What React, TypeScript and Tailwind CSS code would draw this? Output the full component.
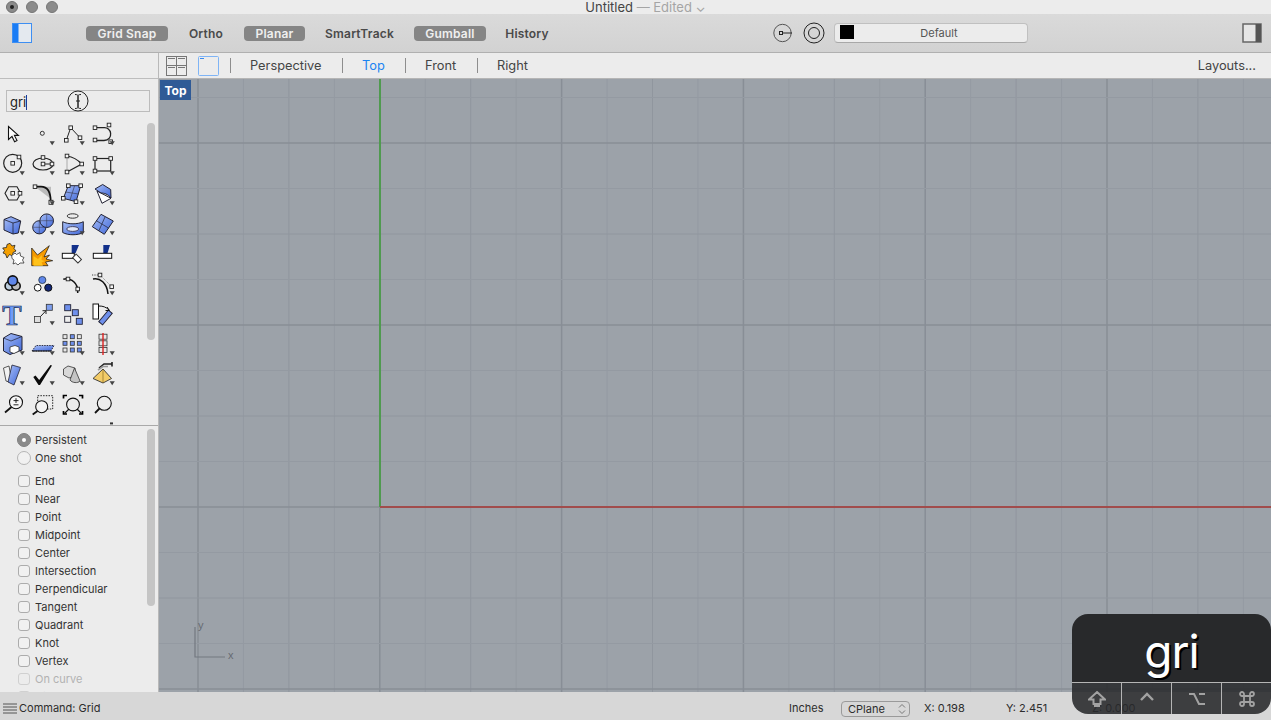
import type { ReactNode } from "react";

const uiFont = "font-['Inter','Liberation_Sans',sans-serif]";

// little square grip used all over the curve tools
const H = ({ x, y, s = 3.6 }: { x: number; y: number; s?: number }) => (
  <rect x={x - s / 2} y={y - s / 2} width={s} height={s} fill="#f4f4f4" stroke="#222" strokeWidth="0.9" />
);

const Drop = () => <polygon points="19.6,22.2 24.8,22.2 22.2,26.2" fill="#444" />;

const BLUE = "url(#toolBlue)";
const line = { fill: "none", stroke: "#222", strokeWidth: 1 };

const tools: ReactNode[] = [
  // row 0
  <path d="M8.5 7.5V20.5L12 17.4L14.6 22.8L17 21.6L14.4 16.4H18.4Z" fill="#fff" stroke="#111" strokeWidth="1.1" />,
  <><circle cx="12.3" cy="14.3" r="2" fill="#eee" stroke="#333" /><Drop /></>,
  <><path d="M6.3 21.3L10.7 8.7L20 18.7" {...line} /><H x={6.3} y={21.3} /><H x={10.7} y={8.7} /><H x={20} y={18.7} /><Drop /></>,
  <><path d="M5 8.7H13C22 7 24 21 14 21.5H5" {...line} strokeWidth={1.3} /><H x={5} y={8.7} /><H x={19} y={6} /><H x={5} y={21} /><H x={20.7} y={22.7} /><Drop /></>,
  // row 1
  <><circle cx="12.7" cy="14.3" r="9" {...line} strokeWidth={1.2} /><H x={12.7} y={14.3} /><H x={19} y={8} /><Drop /></>,
  <><ellipse cx="13" cy="15" rx="10" ry="6" {...line} strokeWidth={1.2} /><path d="M13 15H22" {...line} /><H x={13} y={8.5} /><H x={13} y={15} /><H x={22} y={15} /><Drop /></>,
  <><path d="M7 7C14 8 18 11 21.7 15L7 23" {...line} strokeWidth={1.2} /><path d="M7 7V23" fill="none" stroke="#aaa" /><H x={7} y={7} /><H x={21.7} y={15} /><H x={7} y={23} /><Drop /></>,
  <><rect x="5" y="9.5" width="15.7" height="12.5" {...line} strokeWidth={1.2} /><H x={5} y={9.5} /><H x={20.7} y={9.5} /><H x={5} y={22} /><Drop /></>,
  // row 2
  <><polygon points="5,14.3 8.7,7.7 17,7.7 20.7,14.3 17,21 8.7,21" fill="none" stroke="#222" strokeWidth="1.1" /><H x={12.7} y={14.3} /><H x={20} y={14.3} /><Drop /></>,
  <><path d="M5 7.7H21V20Z" fill="#bbb" /><path d="M5 7.7H11C17 7.7 20.7 12 20.7 23" fill="none" stroke="#111" strokeWidth="1.8" /><H x={5} y={7.7} /><H x={21} y={23.3} s={4} /><Drop /></>,
  <><polygon points="8.3,6.7 20.7,6.7 16,22.7 3.3,19.3" fill={BLUE} stroke="#223" /><path d="M14.5 7L10 21M5.5 13L18.5 15" fill="none" stroke="#334" strokeWidth="0.6" /><H x={8.3} y={6.7} /><H x={20.7} y={6.7} /><H x={3.3} y={19.3} /><H x={16} y={22.7} /><Drop /></>,
  <><path d="M7 12L12 24.3L21 19.3Z" fill="#fff" stroke="#223" /><path d="M5 10L12.7 5.5L20.7 10.5L21 19C18 15 14 14 11 14Z" fill={BLUE} stroke="#223" /><Drop /></>,
  // row 3
  <><polygon points="4,10.5 11,7.7 20.7,12 18.3,24 13,25 4,21" fill={BLUE} stroke="#223" /><path d="M4 10.5L13 14L20.7 12M13 14V25" fill="none" stroke="#223" strokeWidth="0.8" /><Drop /></>,
  <><circle cx="9.3" cy="18.3" r="6.6" fill={BLUE} stroke="#223" /><circle cx="16.7" cy="11.7" r="6.8" fill={BLUE} stroke="#223" /><path d="M10 11.7H23.5M16.7 5V18.5M2.7 18.3H15M9.3 12V25" fill="none" stroke="#334" strokeWidth="0.5" /><Drop /></>,
  <><ellipse cx="12.7" cy="7" rx="5.5" ry="2.2" fill="none" stroke="#333" /><path d="M2.7 12.7C8 15.5 18 15.5 23.3 12.7V23.5C18 26.5 8 26.5 2.7 23.5Z" fill={BLUE} stroke="#223" /><ellipse cx="12.7" cy="20" rx="6" ry="2.4" fill="#dfe6f8" stroke="#446" /><Drop /></>,
  <><polygon points="11,5.3 23.3,12 14.3,25.3 2.3,17.7" fill={BLUE} stroke="#223" /><path d="M6 11.5L18.5 19M15 8L9 21.5" fill="none" stroke="#223" strokeWidth="0.7" /><Drop /></>,
  // row 4
  <><path d="M2.7 9L6.5 8.5L7 5.5L10 4.3L12 7L15 6.3L14 9.5L16 12L13 13.5L12.5 17L9.5 15.5L7 19L5.5 15L3 14L4.5 11.5Z" fill="#f5a000" stroke="#222" strokeWidth="0.8" /><path d="M11.7 16.5L15 14L16.5 15.5L20 13.5L20.5 17L24 18.5L22.5 21L24 24L20 24L18 26L15.5 24L13 25L14 21L12 19.5Z" fill="#fff" stroke="#333" strokeWidth="0.8" /></>,
  <><polygon points="1.7,26.7 1.7,9 7.5,16 19.3,6.7 14,18 19.5,16 16,20 22.7,21.7 15.5,23 18,26.7" fill="#f59a00" stroke="#111" strokeWidth="0.7" /><polygon points="3.5,26.7 3.5,17 8,20 12,16 11.5,21 15,22 11.5,23.5 13,26.7" fill="#ffc21a" /></>,
  <><polygon points="11.7,6 19,6 15.5,14.3 11.7,14.3" fill="#12308a" /><rect x="2.3" y="14.3" width="12" height="5" fill="#fff" stroke="#111" /><rect x="13.3" y="17" width="7.5" height="5" transform="rotate(45 17 19.5)" fill="#fff" stroke="#333" /></>,
  <><polygon points="13.3,6 20,6 17.5,14.3 13.3,14.3" fill="#12308a" /><rect x="3.3" y="14.3" width="18.4" height="5" fill="#fff" stroke="#111" /></>,
  // row 5
  <><circle cx="9.3" cy="17" r="4.2" fill="#bcd" stroke="#111" strokeWidth="1.6" /><circle cx="16" cy="17" r="4.2" fill="#bbb" stroke="#111" strokeWidth="1.6" /><circle cx="12.7" cy="11.7" r="4.8" fill="#5f86e8" stroke="#111" strokeWidth="1.6" /><Drop /></>,
  <><circle cx="12.3" cy="11" r="3.6" fill="#5f86e8" stroke="#123" strokeWidth="0.7" /><circle cx="7.7" cy="18.7" r="3.4" fill="#fff" stroke="#111" /><circle cx="18.3" cy="18.7" r="3.6" fill="#12277a" stroke="#111" /></>,
  <><path d="M3.3 10.3C9 8.5 16 12 17.7 20V24" fill="none" stroke="#111" strokeWidth="1.5" /><H x={8} y={10} /><H x={17.7} y={20} /></>,
  <><path d="M3 10C10 8.5 17 14 18 25" fill="none" stroke="#111" strokeWidth="1.5" /><path d="M2 6H10" fill="none" stroke="#444" strokeDasharray="1.2 1.2" /><path d="M10 6L21.7 17.7" fill="none" stroke="#888" strokeDasharray="1 1" /><H x={10} y={6} /><H x={21.7} y={17.7} /><Drop /></>,
  // row 6
  <><text x="12" y="25.5" textAnchor="middle" fontFamily="'Liberation Serif',serif" fontWeight="700" fontSize="29" fill="#6f9bf5" stroke="#10204a" strokeWidth="0.7">T</text></>,
  <><rect x="4.5" y="17.5" width="6" height="6" fill="#ddd" stroke="#333" strokeWidth="0.8" /><rect x="16.3" y="5.3" width="6" height="6" fill="#7f9fee" stroke="#333" strokeWidth="0.8" /><path d="M10.5 17.5L16 11.7M12.5 11.7H16V15" fill="none" stroke="#222" /><Drop /></>,
  <>{[[7.7, 8.7, "#6f90ec"], [15.3, 13.7, "#6f90ec"], [7.7, 20.3, "#eee"], [19.3, 22.3, "#6f90ec"]].map(([x, y, c], i) => (<rect key={i} x={(x as number) - 3} y={(y as number) - 3} width="6" height="6" fill={c as string} stroke="#223" strokeWidth="0.9" />))}</>,
  <><rect x="3" y="5" width="5.5" height="15" fill="#fff" stroke="#111" /><rect x="13" y="11" width="5" height="15" transform="rotate(40 15.5 18.5)" fill="#6f90ec" stroke="#223" /><path d="M9 7C13 7 16 8 19 11M17 8L19.5 11.5L15.5 11.5" fill="none" stroke="#111" /></>,
  // row 7
  <><polygon points="3.5,9 11,4.5 22,7.5 22,21 10,25.5 3.5,22" fill={BLUE} stroke="#223" /><path d="M3.5 9L11 12L22 7.5" fill="none" stroke="#223" strokeWidth="0.7" /><polygon points="10,18 15,16.5 19,18 19,22 14,24.5 10,23" fill="#fff" stroke="#333" strokeWidth="0.8" /><Drop /></>,
  <><polygon points="2,22 6,16.5 24,16.5 21,22" fill={BLUE} stroke="#223" strokeDasharray="1.5 1" strokeWidth="0.9" /><path d="M2 22H21" stroke="#111" strokeWidth="1" /><Drop /></>,
  <>{[5, 12.3, 19.3].flatMap((x, i) => [7.7, 14.3, 21].map((y, j) => (<rect key={`${i}${j}`} x={x - 2} y={y - 2} width="4" height="4" fill={(i + j) % 3 === 1 || j === 1 ? "#6f90ec" : i === 1 && j === 2 ? "#6f90ec" : "#e8e8e8"} stroke="#333" strokeWidth="0.8" />)))}<Drop /></>,
  <>{[7.7, 14.3, 21].map((y) => (<rect key={y} x="9" y={y - 2.5} width="8" height="5" fill="#e8e8e8" stroke="#333" strokeWidth="0.8" />))}<path d="M13 4V26" stroke="#d22" strokeWidth="1.4" /><Drop /></>,
  // row 8
  <><polygon points="3.5,9 9,7 12,24 6,22" fill="#f2f2f2" stroke="#333" strokeWidth="0.8" /><polygon points="12,6 20.5,8.5 14,26 8,23" fill={BLUE} stroke="#223" strokeWidth="0.8" /><Drop /></>,
  <><polygon points="3.3,18 5.5,16.5 9.2,21 20.5,6 22,6.5 10,26 8.5,26" fill="#0a0a0a" /><Drop /></>,
  <><polygon points="3.5,10 8,7 15,9 15,17 9,19 3.5,16" fill="#d8d8d8" stroke="#333" strokeWidth="0.8" /><path d="M14.5 9L10 21C12 24 18 24.5 20 22Z" fill="#c4c4c4" stroke="#333" strokeWidth="0.8" /><Drop /></>,
  <><polygon points="13,10 21.5,19.5 13,24 3,19.5" fill="#f3cc68" stroke="#333" strokeWidth="0.9" /><path d="M13 10V24" stroke="#7a5c12" strokeWidth="0.6" /><path d="M9 9L14 5H22M22 3V7.5" fill="none" stroke="#222" strokeWidth="1.6" /><path d="M8 11L13 7.5H18" fill="none" stroke="#999" strokeWidth="1.6" /><Drop /></>,
  // row 9
  <><circle cx="16" cy="13.3" r="6.5" fill="#f6f6f6" stroke="#111" strokeWidth="1.1" /><path d="M11.5 18L5 23.5" stroke="#111" strokeWidth="1.8" /><path d="M13.5 11.6H18.5M16 9.2V14M13.5 15.8H18.5" stroke="#111" strokeWidth="0.9" /></>,
  <><rect x="7.7" y="6.7" width="15" height="13.3" fill="none" stroke="#222" strokeDasharray="1.5 1.2" /><circle cx="11.7" cy="17.7" r="6" fill="#f3f3f3" stroke="#111" strokeWidth="1.1" /><path d="M7.5 22L2.7 25.5" stroke="#111" strokeWidth="1.8" /></>,
  <><path d="M3.5 9.5V6.5H7M19 6.5H22.5V9.5M3.5 22V25H7M19 25H22.5V22" fill="none" stroke="#000" strokeWidth="1.7" /><circle cx="13" cy="15.5" r="6.4" fill="none" stroke="#111" strokeWidth="1.1" /><path d="M9 20L4.5 24.5M17 20L21.5 24.5" stroke="#111" strokeWidth="1.2" /></>,
  <><circle cx="14.3" cy="14.3" r="7" fill="none" stroke="#111" strokeWidth="1.1" /><path d="M9.5 19.5L5 24" stroke="#111" strokeWidth="1.8" /></>,
  // row 10, only its top edge shows
  <></>,
  <></>,
  <></>,
  <rect x="20" y="3.4" width="3" height="2" fill="#333" />,
];

const persist = [
  { label: "Persistent", on: true },
  { label: "One shot", on: false },
];

const snaps = [
  "End",
  "Near",
  "Point",
  "Midpoint",
  "Center",
  "Intersection",
  "Perpendicular",
  "Tangent",
  "Quadrant",
  "Knot",
  "Vertex",
];

const toggles = [
  { label: "Grid Snap", w: "w-[82px]", on: true },
  { label: "Ortho", w: "w-[40px]", on: false },
  { label: "Planar", w: "w-[61px]", on: true },
  { label: "SmartTrack", w: "w-[73px]", on: false },
  { label: "Gumball", w: "w-[72px]", on: true },
  { label: "History", w: "w-[46px]", on: false },
];

// major lines every 182px, split in four
const vLines = Array.from({ length: 25 }, (_, i) => 198 + i * 45.45);
const hLines = Array.from({ length: 14 }, (_, i) => 97.5 + i * 45.5);

const gridStroke = (i: number) => (i % 4 === 0 ? "#888e96" : i % 4 === 2 ? "#90969e" : "#949aa2");

function Viewport() {
  return (
    <div className="relative flex-1 min-h-0 bg-[#9ca2a9] overflow-hidden">
      <svg className="block w-full h-full" viewBox="159 79 1112 613">
        {vLines.map((x, i) => (
          <line key={x} x1={x} x2={x} y1={79} y2={692} stroke={gridStroke(i)} strokeWidth={i % 4 === 0 ? 1.5 : 1} />
        ))}
        {hLines.map((y, i) => (
          <line key={y} x1={159} x2={1271} y1={y} y2={y} stroke={gridStroke(i + 3)} strokeWidth={(i + 3) % 4 === 0 ? 1.5 : 1} />
        ))}
        <line x1={380} x2={380} y1={79} y2={507} stroke="#4f9a4f" strokeWidth="2" />
        <line x1={380} x2={1271} y1={507} y2={507} stroke="#a14c4c" strokeWidth="2" />
        <path d="M195 627V657H225" fill="none" stroke="#737880" strokeWidth="1.2" />
        <text x="198" y="629" fontSize="11" fill="#666b72" fontFamily="'Liberation Sans',sans-serif">y</text>
        <text x="228" y="659" fontSize="11" fill="#666b72" fontFamily="'Liberation Sans',sans-serif">x</text>
      </svg>
      <div className="absolute left-[1px] top-[1px] w-[31px] h-[20px] bg-[#2f5a96] text-white text-[12px] font-bold leading-[21px] text-center">
        Top
      </div>
    </div>
  );
}

function Sidebar() {
  return (
    <div className="w-[159px] shrink-0 bg-[#ececec] border-r border-[#b9b9b9] flex flex-col">
      <div className="h-[26px] shrink-0 border-b border-[#bdbdbd]" />
      <div className="relative h-[40px] shrink-0 pl-[6px] pt-[11px]">
        <div className="relative w-[144px] h-[22px] border border-[#bcbcbc] text-[13px] text-[#222] leading-[22px] pl-[3px]">
          gri
          <span className="inline-block w-px h-[15px] bg-[#1a3a9a] align-[-3px]" />
        </div>
        <svg className="absolute left-[67px] top-[11px]" width="22" height="24" viewBox="0 0 22 24">
          <circle cx="11" cy="11" r="10" fill="none" stroke="#222" />
          <path d="M8 4.5C10 4.5 11 5 11 6V17C11 18 10 18.5 8 18.5M14 4.5C12 4.5 11 5 11 6V17C11 18 12 18.5 14 18.5M9 11H13" fill="none" stroke="#222" />
        </svg>
      </div>
      <div className="relative h-[306px] shrink-0 overflow-hidden">
        <div className="grid grid-cols-[repeat(4,30px)] auto-rows-[30px]">
          {tools.map((t, i) => (
            <svg key={i} width="30" height="30" viewBox="0 0 30 30">
              {t}
            </svg>
          ))}
        </div>
        <div className="absolute left-[147px] top-[4px] w-[8px] h-[217px] rounded-full bg-[#c5c5c5]" />
      </div>
      <div className="relative flex-1 min-h-0 border-t border-[#a9a9a9] overflow-hidden pt-[5px] text-[11px] text-[#333]">
        {persist.map((p) => (
          <div key={p.label} className="flex items-center h-[18px] pl-[17px]">
            <span className={`flex items-center justify-center w-[14px] h-[14px] rounded-full border ${p.on ? "bg-[#8a8a8a] border-[#808080]" : "bg-[#f1f1f1] border-[#b5b5b5]"}`}>
              {p.on && <span className="w-[4px] h-[4px] rounded-full bg-white" />}
            </span>
            <span className="ml-[4px]">{p.label}</span>
          </div>
        ))}
        <div className="mt-[5px]">
          {snaps.map((s) => (
            <div key={s} className="flex items-center h-[18px] pl-[18px]">
              <span className="w-[12px] h-[12px] rounded-[3px] border border-[#acacac] bg-[#f1f1f1]" />
              <span className="ml-[5px]">{s}</span>
            </div>
          ))}
          <div className="flex items-center h-[18px] pl-[18px] text-[#b2b2b2]">
            <span className="w-[12px] h-[12px] rounded-[3px] border border-[#d0d0d0]" />
            <span className="ml-[5px]">On curve</span>
          </div>
          <div className="flex items-center h-[18px] pl-[18px] text-[#c4c4c4]">
            <span className="w-[12px] h-[12px] rounded-[3px] border border-[#d0d0d0]" />
            <span className="ml-[5px]">Disable</span>
          </div>
        </div>
        <div className="absolute left-[147px] top-[3px] w-[8px] h-[177px] rounded-full bg-[#c5c5c5]" />
      </div>
    </div>
  );
}

function ViewTabs() {
  return (
    <div className="h-[26px] shrink-0 bg-[#ececec] border-b border-[#b5b5b5] flex items-center pl-[7px] pr-[15px] text-[12.8px] text-[#444]">
      <svg width="21" height="20" viewBox="0 0 21 20">
        <rect x="0.5" y="0.5" width="20" height="19" fill="none" stroke="#777" />
        <path d="M10.5 1V19M1 9.5H20M2 2.5H9M12 2.5H19M2 11.5H9M12 11.5H19" fill="none" stroke="#777" />
      </svg>
      <svg className="ml-[11px]" width="21" height="20" viewBox="0 0 21 20">
        <rect x="0.5" y="0.5" width="20" height="19" rx="1" fill="#ececec" stroke="#7fb4f5" />
        <path d="M2 2.5H6" stroke="#3b8bf0" />
      </svg>
      <span className="ml-[11px] w-px h-[15px] bg-[#8d8d8d]" />
      <span className="ml-[19px] w-[72px]">Perspective</span>
      <span className="ml-[20px] w-px h-[15px] bg-[#8d8d8d]" />
      <span className="ml-[19px] w-[23px] text-[#1b84f2]">Top</span>
      <span className="ml-[20px] w-px h-[15px] bg-[#8d8d8d]" />
      <span className="ml-[19px] w-[32px]">Front</span>
      <span className="ml-[20px] w-px h-[15px] bg-[#8d8d8d]" />
      <span className="ml-[19px]">Right</span>
      <span className="ml-auto">Layouts...</span>
    </div>
  );
}

export default function App() {
  return (
    <div className={`relative w-full h-screen overflow-hidden flex flex-col bg-[#ececec] ${uiFont}`}>
      <div className="relative h-[14px] shrink-0 bg-[#ececec] overflow-hidden">
        <div className="absolute left-[6px] top-[1px] flex gap-[8px]">
          <span className="flex items-center justify-center w-[12px] h-[12px] rounded-full bg-[#8b8b8b] border border-[#6f6f6f]">
            <span className="w-[4px] h-[4px] rounded-full bg-[#222]" />
          </span>
          <span className="w-[12px] h-[12px] rounded-full bg-[#8b8b8b] border border-[#777]" />
          <span className="w-[12px] h-[12px] rounded-full bg-[#8b8b8b] border border-[#777]" />
        </div>
        <div className="text-center text-[13px] leading-[14px] text-[#444] pl-[20px]">
          Untitled <span className="text-[#a5a5a5]">— Edited ⌄</span>
        </div>
      </div>

      <div className="h-[39px] shrink-0 bg-gradient-to-b from-[#dadada] to-[#d2d2d2] border-b border-[#b0b0b0] flex items-center pl-[12px] pr-[9px]">
        <svg width="20" height="20" viewBox="0 0 20 20">
          <rect x="0.5" y="0.5" width="19" height="19" fill="#e4e9ef" stroke="#3d8ef2" />
          <rect x="1" y="1" width="5.5" height="18" fill="#1a7cf5" />
        </svg>
        <div className="ml-[54px] flex items-center gap-[18px]">
          {toggles.map((t) => (
            <div
              key={t.label}
              className={`${t.w} h-[15px] rounded-[4px] text-center text-[12px] font-semibold leading-[15px] tracking-[0.2px] ${t.on ? "bg-[#858585] text-[#efefef]" : "text-[#4a4a4a]"}`}
            >
              {t.label}
            </div>
          ))}
        </div>
        <div className="ml-auto flex items-center">
          <svg width="20" height="20" viewBox="0 0 20 20">
            <circle cx="9.5" cy="10" r="8.7" fill="none" stroke="#555" />
            <rect x="6.5" y="8.5" width="3" height="3" fill="none" stroke="#222" />
            <path d="M9.5 10H19" stroke="#222" />
          </svg>
          <svg className="ml-[10px]" width="22" height="22" viewBox="0 0 22 22">
            <circle cx="11" cy="11" r="10" fill="none" stroke="#222" />
            <circle cx="11" cy="11" r="5.5" fill="none" stroke="#222" />
          </svg>
          <div className="relative ml-[9px] w-[194px] h-[20px] rounded-[4px] bg-[#ececec] border border-[#c0c0c0] border-b-[#a8a8a8] text-center text-[11px] leading-[18px] text-[#555] pl-[16px]">
            <span className="absolute left-[5px] top-[1px] w-[14px] h-[14px] bg-black" />
            Default
          </div>
          <svg className="ml-[214px]" width="20" height="20" viewBox="0 0 20 20">
            <rect x="1" y="1" width="18" height="18" fill="#e6e6e6" stroke="#666" strokeWidth="1.5" />
            <rect x="13.5" y="1" width="5.5" height="18" fill="#555" />
          </svg>
        </div>
      </div>

      <div className="flex flex-1 min-h-0">
        <Sidebar />
        <div className="flex-1 min-w-0 flex flex-col">
          <ViewTabs />
          <Viewport />
        </div>
      </div>

      <div className="h-[28px] shrink-0 bg-[#d7d7d7] flex items-center pt-[5px] text-[11px] text-[#2d2d2d]">
        <svg className="ml-[3px]" width="14" height="11" viewBox="0 0 14 11">
          <path d="M0 1H14M0 4H14M0 7H14M0 10H14" stroke="#555" />
        </svg>
        <span className="ml-[2px] w-[770px]">Command: Grid</span>
        <span className="w-[52px]">Inches</span>
        <div className="relative w-[69px] h-[16px] rounded-[4px] border border-[#9a9a9a] leading-[14px] pl-[6px]">
          CPlane
          <svg className="absolute right-[3px] top-[1px]" width="8" height="12" viewBox="0 0 8 12">
            <path d="M1 4.5L4 1.5L7 4.5M1 7.5L4 10.5L7 7.5" fill="none" stroke="#777" />
          </svg>
        </div>
        <span className="ml-[14px] w-[82px]">X: 0.198</span>
        <span className="w-[86px]">Y: 2.451</span>
        <span>Z: 0.000</span>
      </div>

      <div className="absolute left-[1072px] top-[614px] w-[199px] h-[100px] rounded-[16px] overflow-hidden flex flex-col">
        <div className="h-[69px] bg-[#28292b] border-b border-[#b5b5b5] text-center text-white text-[46px] leading-[74px] [text-shadow:2px_2px_0_#000] tracking-[-1px]">
          gri
        </div>
        <div className="flex-1 bg-[#28292b]/88 flex text-[#9a9a9a]">
          <div className="w-[50px] border-r border-[#b5b5b5] flex items-center justify-center">
            <svg width="18" height="18" viewBox="0 0 18 18">
              <path d="M9 2L17 9.5H12.5V14H5.5V9.5H1Z M6 16H12" fill="none" stroke="#a2a2a2" strokeWidth="2" />
            </svg>
          </div>
          <div className="w-[50px] border-r border-[#b5b5b5] flex items-center justify-center pb-[4px]">
            <svg width="14" height="10" viewBox="0 0 14 10">
              <path d="M1 8L7 2L13 8" fill="none" stroke="#a2a2a2" strokeWidth="2.4" />
            </svg>
          </div>
          <div className="w-[50px] border-r border-[#b5b5b5] flex items-center justify-center">
            <svg width="18" height="14" viewBox="0 0 18 14">
              <path d="M1 2H6L11 12H17M11 2H17" fill="none" stroke="#a2a2a2" strokeWidth="2" />
            </svg>
          </div>
          <div className="flex-1 flex items-center justify-center">
            <svg width="16" height="16" viewBox="0 0 16 16">
              <path d="M5 5H11V11H5ZM5 5H3A2 2 0 1 1 5 3ZM11 5V3A2 2 0 1 1 13 5ZM11 11H13A2 2 0 1 1 11 13ZM5 11V13A2 2 0 1 1 3 11Z" fill="none" stroke="#a2a2a2" strokeWidth="1.8" />
            </svg>
          </div>
        </div>
      </div>

      <svg className="absolute w-0 h-0">
        <defs>
          <linearGradient id="toolBlue" x1="0" y1="0" x2="1" y2="1">
            <stop offset="0" stopColor="#a9c0f7" />
            <stop offset="1" stopColor="#3f66d8" />
          </linearGradient>
        </defs>
      </svg>
    </div>
  );
}
